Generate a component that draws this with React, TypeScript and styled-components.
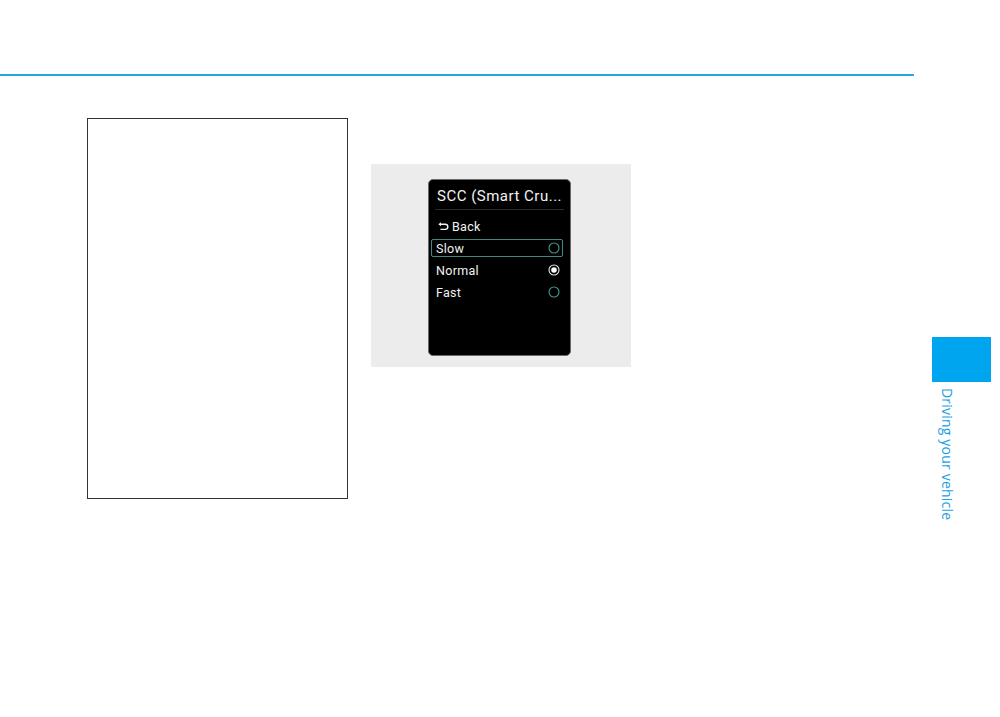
import React from "react";
import styled, { createGlobalStyle } from "styled-components";

const Global = createGlobalStyle`
  html, body { margin: 0; padding: 0; background: #ffffff; }
  body { font-family: "Liberation Sans", Arial, sans-serif; }
`;

const Page = styled.div`
  width: 1000px;
  height: 717px;
  display: flex;
  background: #ffffff;
  overflow: hidden;
`;

const Main = styled.div`
  width: 914px;
  display: flex;
  flex-direction: column;
`;

const Rule = styled.div`
  margin-top: 74px;
  height: 2px;
  background: #27a6e2;
`;

const Content = styled.div`
  display: flex;
  align-items: flex-start;
  padding-left: 87px;
  margin-top: 42px;
  gap: 23px;
`;

const NoteBox = styled.div`
  box-sizing: border-box;
  width: 261px;
  height: 381px;
  border: 1px solid #333333;
`;

const Figure = styled.div`
  margin-top: 46px;
  width: 260px;
  height: 203px;
  background: #ececec;
  display: flex;
  padding: 15px 0 0 57px;
  box-sizing: border-box;
`;

const Screen = styled.div`
  box-sizing: border-box;
  width: 143px;
  height: 177px;
  background: #000;
  border: 1px solid #6a6a6a;
  border-radius: 5px;
  display: flex;
  flex-direction: column;
  font-family: Roboto, "Liberation Sans", sans-serif;
  color: #f2f2f2;
`;

const Title = styled.div`
  height: 30px;
  margin: 0 6px;
  padding: 0 0 4px 2px;
  box-sizing: border-box;
  display: flex;
  align-items: flex-end;
  font-size: 15px;
  letter-spacing: 0.5px;
  border-bottom: 1px solid #2c2c2c;
  white-space: nowrap;
`;

const List = styled.div`
  display: flex;
  flex-direction: column;
  padding: 5px 7px 0 2px;
`;

const Row = styled.div<{ $focused?: boolean }>`
  box-sizing: border-box;
  height: 22px;
  display: flex;
  align-items: center;
  justify-content: space-between;
  padding: 0 2px 0 4px;
  font-size: 12.5px;
  letter-spacing: 0.3px;
  border: 1px solid ${(p) => (p.$focused ? "#3d8c83" : "transparent")};
  border-radius: 2px;
  ${(p) => p.$focused && "height: 18px; margin: 2px 0;"}
`;

const BackLabel = styled.span`
  display: flex;
  align-items: center;
  gap: 3px;
  padding-left: 2px;
`;

const Side = styled.div`
  flex: 1;
  display: flex;
  flex-direction: column;
  align-items: flex-start;
  padding-top: 337px;
  padding-left: 18px;
`;

const Tab = styled.div`
  width: 59px;
  height: 45px;
  background: #00a5ef;
`;

const SideLabel = styled.div`
  writing-mode: vertical-rl;
  margin-top: 6px;
  margin-left: 7px;
  font-family: "Open Sans", "Liberation Sans", sans-serif;
  font-size: 14px;
  line-height: 16px;
  color: #1c9fe3;
  letter-spacing: 0.2px;
`;

const BackIcon = () => (
  <svg width="11" height="9" viewBox="0 0 11 9" fill="none">
    <path d="M2 2.2 H7.2 A2.6 2.6 0 0 1 7.2 7.4 H2.5" stroke="#f2f2f2" strokeWidth="1.4" />
    <path d="M0.3 2.2 L3 0.2 V4.2 Z" fill="#f2f2f2" />
  </svg>
);

const Radio = ({ on }: { on?: boolean }) => (
  <svg width="12" height="12" viewBox="0 0 12 12">
    <circle cx="6" cy="6" r="5" fill="none" stroke={on ? "#e8e8e8" : "#3f9c90"} strokeWidth="1.1" />
    {on && <circle cx="6" cy="6" r="2.8" fill="#ffffff" />}
  </svg>
);

export default function App() {
  return (
    <Page>
      <Global />
      <Main>
        <Rule />
        <Content>
          <NoteBox />
          <Figure>
            <Screen>
              <Title>SCC (Smart Cru...</Title>
              <List>
                <Row>
                  <BackLabel>
                    <BackIcon />
                    Back
                  </BackLabel>
                </Row>
                <Row $focused>
                  <span>Slow</span>
                  <Radio />
                </Row>
                <Row>
                  <span>Normal</span>
                  <Radio on />
                </Row>
                <Row>
                  <span>Fast</span>
                  <Radio />
                </Row>
              </List>
            </Screen>
          </Figure>
        </Content>
      </Main>
      <Side>
        <Tab />
        <SideLabel>Driving your vehicle</SideLabel>
      </Side>
    </Page>
  );
}
